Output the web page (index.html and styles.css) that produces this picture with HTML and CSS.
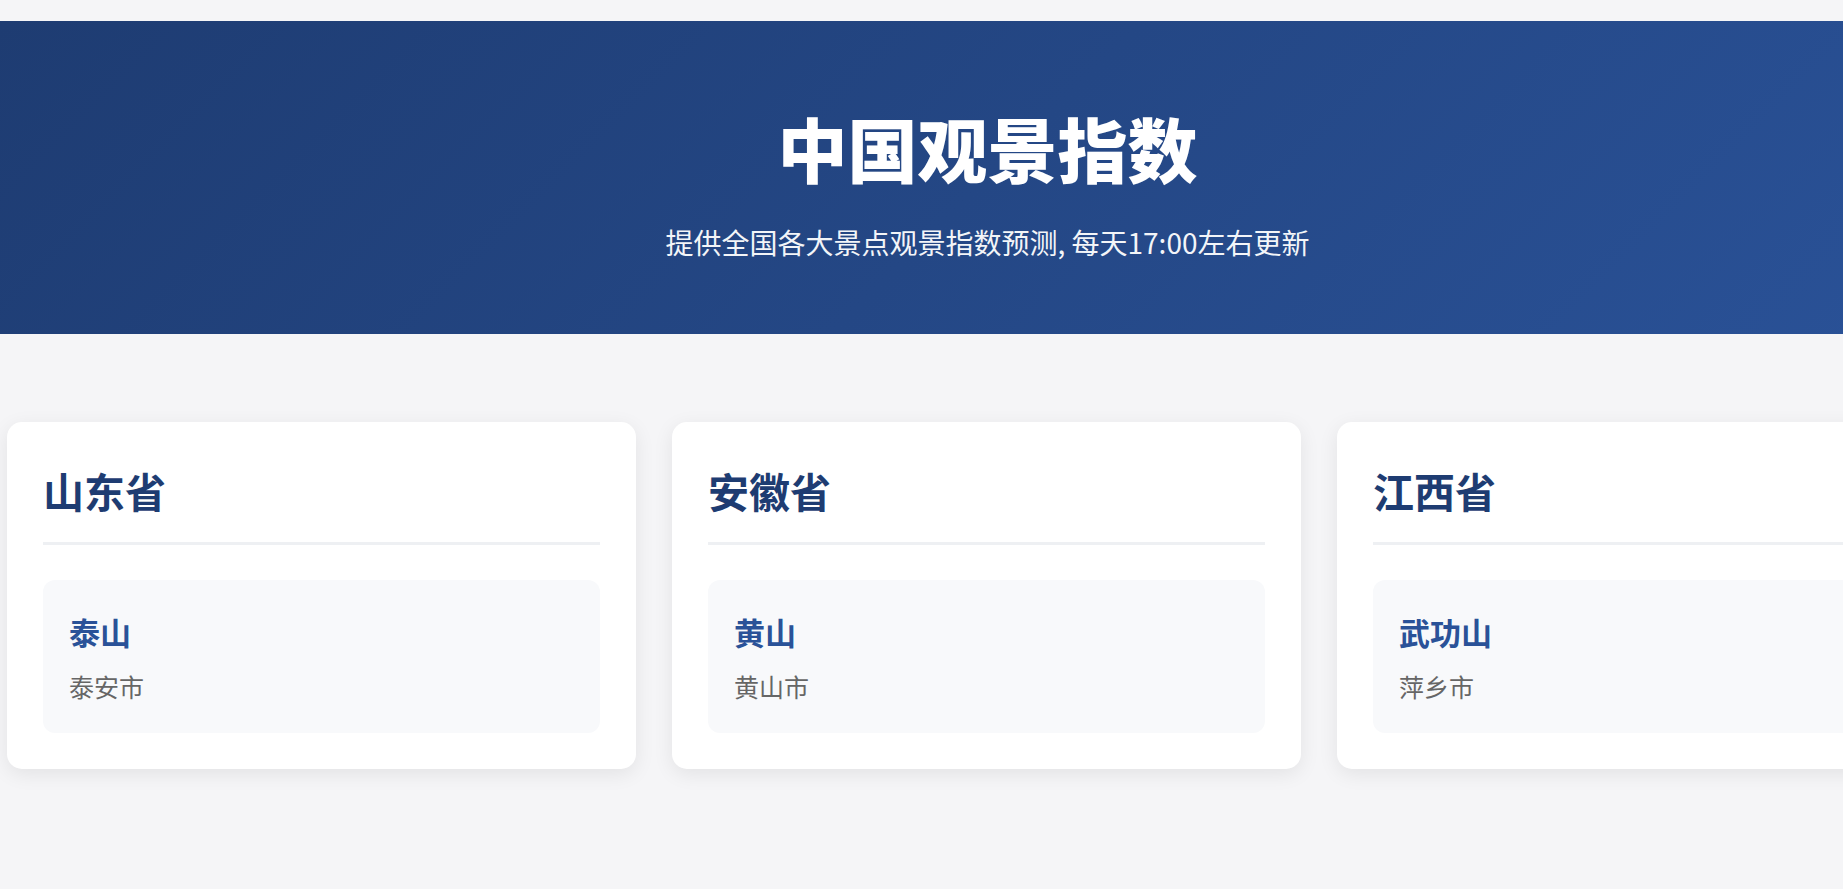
FILE: index.html
```html
<!DOCTYPE html>
<html lang="zh-CN">
<head>
  <meta charset="UTF-8" />
  <meta name="viewport" content="width=device-width, initial-scale=1.0"/>
  <title>中国观景指数</title>
  <link rel="stylesheet" href="styles.css">
</head>
<body>
  <div class="page">
    <header class="hero">
      <h1>中国观景指数</h1>
      <p>提供全国各大景点观景指数预测, 每天17:00左右更新</p>
    </header>

    <main class="provinces">
      <section class="province-card">
        <h2>山东省</h2>
        <div class="spot">
          <h3>泰山</h3>
          <p>泰安市</p>
        </div>
      </section>

      <section class="province-card">
        <h2>安徽省</h2>
        <div class="spot">
          <h3>黄山</h3>
          <p>黄山市</p>
        </div>
      </section>

      <section class="province-card">
        <h2>江西省</h2>
        <div class="spot">
          <h3>武功山</h3>
          <p>萍乡市</p>
        </div>
      </section>
    </main>
  </div>
</body>
</html>
```

FILE: styles.css
```css
html, body {
  overflow: hidden;
}

body {
  margin: 0;
  background: #f5f5f7;
  font-family: "Noto Sans CJK SC", "Liberation Sans", sans-serif;
  line-height: 1.6;
}

.page {
  width: 1975px;
  padding-top: 21px;
}

.hero {
  background: linear-gradient(135deg, #1e3c72, #2a5298);
  color: #fff;
  text-align: center;
  padding: 85px 20px 70px;
}

.hero h1 {
  font-size: 70px;
  font-weight: 900;
  line-height: 84px;
  margin: 0 0 30px;
}

.hero p {
  font-size: 28px;
  line-height: 44px;
  margin: 0;
  opacity: 0.95;
}

.provinces {
  display: flex;
  align-items: flex-start;
  gap: 36px;
  padding: 88px 7px;
}

.province-card {
  flex: none;
  width: 629px;
  box-sizing: border-box;
  padding: 36px;
  background: #fff;
  border-radius: 15px;
  box-shadow: 0 5px 20px rgba(0, 0, 0, 0.08);
}

.province-card h2 {
  font-size: 41px;
  color: #1e3c72;
  margin: 0 0 35px;
  padding-bottom: 18px;
  border-bottom: 3px solid #eef0f3;
}

.spot {
  background: #f8f9fb;
  border-radius: 12px;
  padding: 27px 26px;
}

.spot h3 {
  font-size: 31px;
  color: #2a5298;
  margin: 0 0 10px;
}

.spot p {
  font-size: 25px;
  color: #666;
  margin: 0;
}
```
